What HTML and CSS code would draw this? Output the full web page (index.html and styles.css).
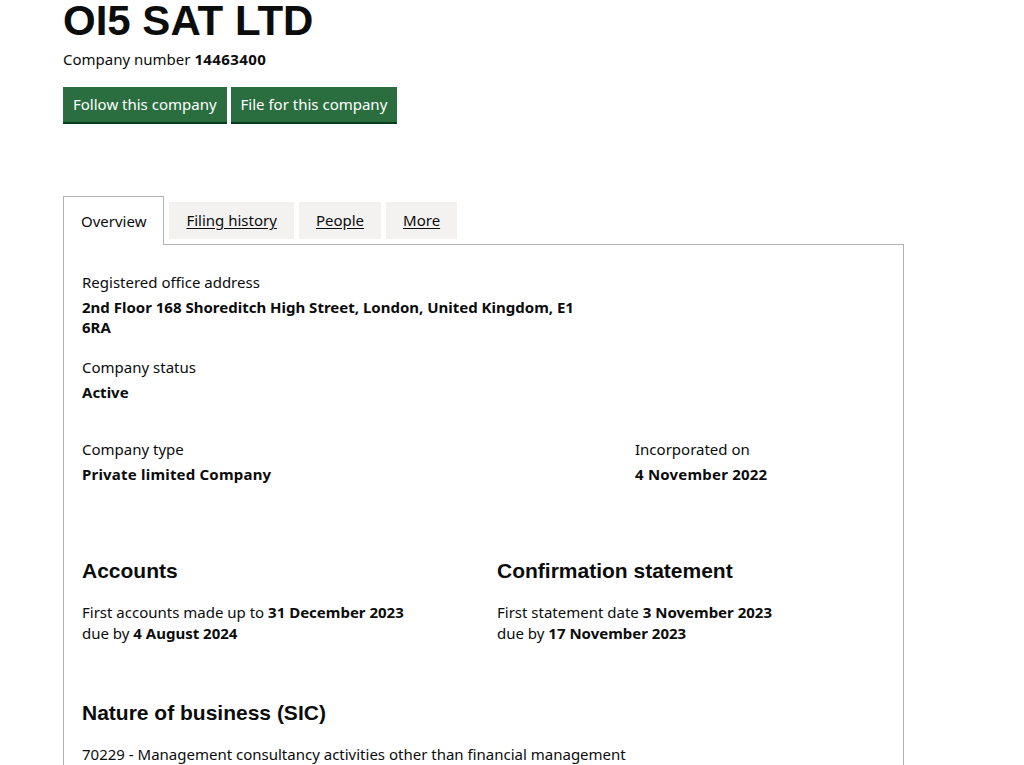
FILE: index.html
```html
<!DOCTYPE html>
<html>
<head>
<meta charset="utf-8">
<link rel="stylesheet" href="styles.css">
</head>
<body>
<main class="page">
  <h1 class="title">OI5 SAT LTD</h1>
  <p class="company-number">Company number <strong>14463400</strong></p>
  <div class="actions">
    <a class="button">Follow this company</a>
    <a class="button">File for this company</a>
  </div>

  <ul class="tabs">
    <li class="tab tab-active">Overview</li>
    <li class="tab"><a>Filing history</a></li>
    <li class="tab"><a>People</a></li>
    <li class="tab"><a>More</a></li>
  </ul>

  <section class="panel">
    <dl class="field address">
      <dt>Registered office address</dt>
      <dd>2nd Floor 168 Shoreditch High Street, London, United Kingdom, E1 6RA</dd>
    </dl>
    <dl class="field">
      <dt>Company status</dt>
      <dd>Active</dd>
    </dl>
    <div class="row-type">
      <dl class="field">
        <dt>Company type</dt>
        <dd>Private limited Company</dd>
      </dl>
      <dl class="field">
        <dt>Incorporated on</dt>
        <dd>4 November 2022</dd>
      </dl>
    </div>

    <div class="row-halves">
      <div class="block">
        <h2 class="heading">Accounts</h2>
        <p class="narrow">First accounts made up to <strong>31 December 2023</strong><br>due by <strong>4 August 2024</strong></p>
      </div>
      <div class="block">
        <h2 class="heading">Confirmation statement</h2>
        <p class="narrow">First statement date <strong>3 November 2023</strong><br>due by <strong>17 November 2023</strong></p>
      </div>
    </div>

    <h2 class="heading sic-heading">Nature of business (SIC)</h2>
    <p class="sic">70229 - Management consultancy activities other than financial management</p>
  </section>
</main>
</body>
</html>
```

FILE: styles.css
```css
html, body {
  margin: 0;
  padding: 0;
  background: #ffffff;
}

body {
  font-family: "Noto Sans", "Liberation Sans", sans-serif;
  color: #0b0c0c;
  font-size: 15px;
  line-height: 20px;
}

.page {
  padding-left: 63px;
  width: 841px;
}

.title {
  margin: 0;
  font-family: "Liberation Sans", Arial, sans-serif;
  font-weight: 700;
  font-size: 42px;
  line-height: 42px;
}

.company-number {
  margin: 7px 0 0 0;
  line-height: 20px;
}

.company-number strong {
  font-weight: 700;
  letter-spacing: 0.4px;
}

.actions {
  margin-top: 18px;
  display: flex;
  gap: 4px;
}

.button {
  display: block;
  background: #2a6e3f;
  color: #ffffff;
  height: 35px;
  line-height: 35px;
  padding: 0 10px 0 10px;
  box-shadow: 0 2px 0 #0b3b1f;
  font-size: 15px;
  cursor: pointer;
}

.tabs {
  list-style: none;
  margin: 74px 0 0 0;
  padding: 0;
  display: flex;
  align-items: flex-end;
  gap: 5px;
}

.tab {
  background: #f3f2f1;
  height: 37px;
  line-height: 37px;
  padding: 0 17px;
  margin-bottom: 5px;
}

.tab a {
  color: #0b0c0c;
  text-decoration: underline;
  text-underline-offset: 2px;
}

.tab-active {
  background: #ffffff;
  border: 1px solid #b1b4b6;
  border-bottom: none;
  height: 48px;
  line-height: 48px;
  margin-bottom: -1px;
  padding: 0 17px;
  position: relative;
  z-index: 1;
}

.panel {
  border: 1px solid #b1b4b6;
  padding: 27px 18px 0 18px;
  height: 520px;
}

.field {
  margin: 0 0 20px 0;
}

.field dt {
  margin: 0 0 5px 0;
}

.field dd {
  margin: 0;
  font-weight: 700;
}

.row-type dd {
  letter-spacing: 0.2px;
}

.address dd {
  width: 500px;
}

.row-type {
  display: grid;
  grid-template-columns: 553px 1fr;
  margin-top: 37px;
}

.row-halves {
  display: grid;
  grid-template-columns: 415px 1fr;
  margin-top: 54px;
}

.heading {
  margin: 0;
  font-family: "Liberation Sans", Arial, sans-serif;
  font-weight: 700;
  font-size: 21px;
  line-height: 26px;
}

.narrow {
  margin: 18px 0 0 0;
  line-height: 21px;
}

.sic-heading {
  margin-top: 56px;
}

.sic {
  margin: 18px 0 0 0;
}
```
